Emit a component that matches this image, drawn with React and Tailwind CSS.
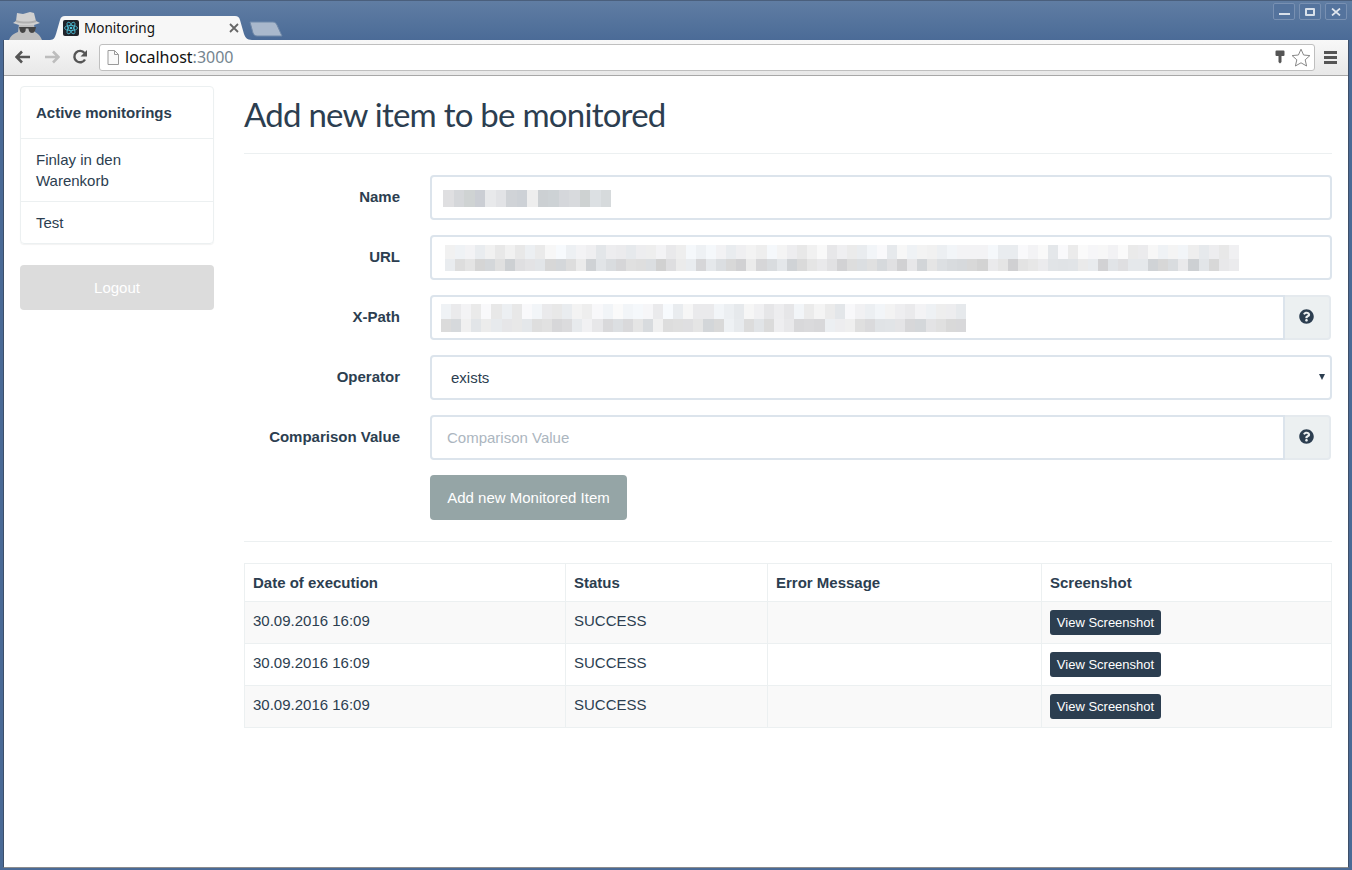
import React from "react";
import { FaQuestionCircle } from "react-icons/fa";

function cells(n, seed, lo, hi) {
  const out = [];
  let s = seed;
  for (let i = 0; i < n; i++) {
    s = (s * 1103515245 + 12345) & 0x7fffffff;
    const v = lo + ((s >> 8) % (hi - lo + 1));
    const tint = (s >> 4) % 3;
    out.push(`rgb(${v - (tint === 0 ? 3 : 0)},${v},${v + (tint === 0 ? 3 : tint === 1 ? 2 : 0)})`);
  }
  return out;
}

const NAME_CELLS = ["#dfdfe1","#d5d7da","#cfd3d3","#cbced4","#e8e9eb","#e2e3e6","#d0d3d7","#cdd1d6","#eeeeee","#ccd0d3","#cdd2d5","#d5d7db","#d8dadd","#ced2d2","#dce0e3","#d6dadc"];

function PixelRow({ colors, cell, height }) {
  return (
    <div className="flex" style={{ height }}>
      {colors.map((c, i) => (
        <div key={i} className="shrink-0" style={{ width: cell, height, background: c }} />
      ))}
    </div>
  );
}

function Pixels({ rows, cell }) {
  return (
    <div className="flex flex-col">
      {rows.map((r, i) => (
        <PixelRow key={i} colors={r.colors} cell={cell} height={r.height} />
      ))}
    </div>
  );
}

function Label({ children }) {
  return (
    <div className="w-[156px] shrink-0 pt-[11px] text-right text-[15px] leading-[21px] font-bold text-[#2c3e50]">
      {children}
    </div>
  );
}

function Help() {
  return (
    <div className="mr-[1px] flex w-[46px] shrink-0 items-center justify-center rounded-r border-2 border-l-0 border-[#e5eaee] bg-[#ecf0f1] pr-[2px]">
      <FaQuestionCircle className="mb-[2px] text-[#2c3e50]" size={15} />
    </div>
  );
}

function Row({ label, children }) {
  return (
    <div className="flex h-[45px] gap-[30px]">
      <Label>{label}</Label>
      <div className="flex min-w-0 flex-1">{children}</div>
    </div>
  );
}

function Incognito() {
  return (
    <svg width="36" height="28" viewBox="0 0 36 28" className="shrink-0">
      <path d="M10 12 L25 12 L26 20 C28 21 31 23 33 28 L0 28 C2 23 6 21 9 20 Z" fill="#bebebe" />
      <path d="M8 1 L14 2 L21 0 L25 1 L27 9 L31 11 L25 13 L10 13 L4 11 L7 9 Z" fill="#d0d0d0" />
      <path d="M7 8 C13 10 21 10 27 8 L27.5 10 C21 12 13 12 6.5 10 Z" fill="#b0b0b0" />
      <path d="M10 15 L17 15 L16.5 19 C15.5 21.5 12 21.5 11 19 Z M19 15 L27 15 L26 19 C25 21.5 21 21.5 20 19 Z M16 15 L20 15 L20 16.5 L16 16.5 Z" fill="#444444" />
    </svg>
  );
}

function ReactFavicon() {
  return (
    <svg width="16" height="16" viewBox="0 0 16 16" className="shrink-0">
      <rect width="16" height="16" rx="2" fill="#20232a" />
      <g fill="none" stroke="#4fc3dc" strokeWidth="0.8">
        <ellipse cx="8" cy="8" rx="6.5" ry="2.6" />
        <ellipse cx="8" cy="8" rx="6.5" ry="2.6" transform="rotate(60 8 8)" />
        <ellipse cx="8" cy="8" rx="6.5" ry="2.6" transform="rotate(120 8 8)" />
      </g>
      <circle cx="8" cy="8" r="1.3" fill="#4fc3dc" />
    </svg>
  );
}

function WinBtn({ children }) {
  return (
    <div className="flex h-[17px] w-[22px] items-center justify-center rounded-[2px] border border-[#7890b2] bg-[#54739d]">
      {children}
    </div>
  );
}

function TitleBar() {
  return (
    <div className="flex h-[40px] shrink-0 border-t border-[#4a5f7c] bg-gradient-to-b from-[#607da3] via-[#55749d] to-[#4b6b97] pl-[9px]">
      <div className="flex items-end">
        <Incognito />
      </div>
      <div className="relative ml-[5px] flex h-[24px] w-[202px] shrink-0 items-center self-end pl-[13px] pr-[13px]">
        <svg width="202" height="24" viewBox="0 0 202 24" className="absolute inset-0">
          <path d="M0 24 C4 24 5 21 6 18 L10 4 C11 1 12 0 15 0 L185 0 C188 0 189 1 190 4 L194 18 C195 21 197 24 202 24 Z" fill="#f7f7f7" />
        </svg>
        <div className="relative flex w-full items-center">
          <ReactFavicon />
          <span className="ml-[5px] flex-1 text-[13.5px] leading-[16px] text-[#111] [font-family:'Noto_Sans',sans-serif]">Monitoring</span>
          <svg width="10" height="10" viewBox="0 0 10 10">
            <path d="M1 1 L9 9 M9 1 L1 9" stroke="#666" strokeWidth="1.8" />
          </svg>
        </div>
      </div>
      <svg width="34" height="16" viewBox="0 0 34 16" className="-ml-[3px] mt-[20px] shrink-0">
        <path d="M1 1 L24 1 C26 1 27 2 28 4 L33 15 L8 15 C6 15 5 14 4 12 Z" fill="#a9b8cc" stroke="#6f88a8" strokeWidth="1" />
      </svg>
      <div className="ml-auto flex gap-[4px] pr-[5px] pt-[2px]">
        <WinBtn><div className="mt-[5px] h-[2px] w-[11px] bg-[#d8e0ea]" /></WinBtn>
        <WinBtn><div className="h-[8px] w-[10px] rounded-[1px] border-2 border-[#d8e0ea]" /></WinBtn>
        <WinBtn>
          <svg width="10" height="8" viewBox="0 0 10 8"><path d="M1 0.5 L9 7.5 M9 0.5 L1 7.5" stroke="#e0e6ee" strokeWidth="1.7" /></svg>
        </WinBtn>
      </div>
    </div>
  );
}

function Toolbar() {
  return (
    <div className="flex h-[36px] shrink-0 items-center rounded-t-[3px] border-b border-[#a8a8a8] bg-gradient-to-b from-[#f8f8f8] to-[#e8e8e8] pb-[1px]">
      <svg width="16" height="14" viewBox="0 0 16 14" className="ml-[11px] shrink-0">
        <path d="M7 1.5 L1.5 7 L7 12.5 M2 7 L15 7" fill="none" stroke="#555" strokeWidth="2.6" />
      </svg>
      <svg width="16" height="14" viewBox="0 0 16 14" className="ml-[13px] shrink-0">
        <path d="M9 1.5 L14.5 7 L9 12.5 M14 7 L1 7" fill="none" stroke="#bdbdbd" strokeWidth="2.6" />
      </svg>
      <svg width="16" height="16" viewBox="0 0 16 16" className="ml-[12px] shrink-0">
        <path d="M13 10.5 A5.7 5.7 0 1 1 12.5 4" fill="none" stroke="#555" strokeWidth="2.4" />
        <path d="M15 1 L15 7.5 L8.5 7.5 Z" fill="#555" />
      </svg>
      <div className="ml-[11px] flex h-[27px] flex-1 items-center rounded-[3px] border border-[#bfbfbf] bg-white">
        <svg width="12" height="15" viewBox="0 0 12 15" className="ml-[7px] shrink-0">
          <path d="M1 0.5 L7.5 0.5 L11.5 4.5 L11.5 14.5 L1 14.5 Z" fill="#fafafa" stroke="#9a9a9a" />
          <path d="M7.5 0.5 L7.5 4.5 L11.5 4.5" fill="none" stroke="#9a9a9a" />
        </svg>
        <span className="ml-[6px] flex-1 text-[16px] leading-[18px] text-[#111] [font-family:'Noto_Sans',sans-serif]">
          localhost<span className="text-[#75858f]">:3000</span>
        </span>
        <svg width="10" height="14" viewBox="0 0 10 14" className="shrink-0">
          <path d="M1.5 0.5 L8.5 0.5 Q9.5 0.5 9.5 1.5 L9.5 5 Q9.5 6 8.5 6 L6.5 6 L6.5 12 L5 13.5 L3.5 12 L3.5 6 L1.5 6 Q0.5 6 0.5 5 L0.5 1.5 Q0.5 0.5 1.5 0.5 Z" fill="#555" />
        </svg>
        <svg width="20" height="19" viewBox="0 0 20 19" className="ml-[6px] mr-[3px] shrink-0">
          <path d="M10 1.2 L12.6 7 L18.9 7.6 L14.2 11.8 L15.6 18 L10 14.8 L4.4 18 L5.8 11.8 L1.1 7.6 L7.4 7 Z" fill="#fff" stroke="#888" strokeWidth="1" />
        </svg>
      </div>
      <div className="ml-[9px] mr-[11px] flex w-[13px] shrink-0 flex-col gap-[2px]">
        <div className="h-[3px] bg-[#555]" />
        <div className="h-[3px] bg-[#555]" />
        <div className="h-[3px] bg-[#555]" />
      </div>
    </div>
  );
}

function Sidebar() {
  return (
    <div className="w-[194px] shrink-0 pt-[10px]">
      <div className="overflow-hidden rounded border border-[#ecf0f1] text-[15px] leading-[21px] text-[#2c3e50] shadow-[0_1px_1px_rgba(0,0,0,0.05)]">
        <div className="h-[52px] border-b border-[#ecf0f1] px-[15px] pt-[15px] font-bold">Active monitorings</div>
        <div className="h-[63px] border-b border-[#ecf0f1] px-[15px] pt-[10px]">Finlay in den<br />Warenkorb</div>
        <div className="h-[41px] px-[15px] pt-[10px]">Test</div>
      </div>
      <div className="mt-[21px] flex h-[45px] items-center justify-center rounded bg-[#dcdcdc] pt-[1px] text-[15px] text-white">Logout</div>
    </div>
  );
}

const inputBox = "flex flex-1 items-center border-2 border-[#dce4ec] bg-white text-[15px] text-[#2c3e50]";

function Form() {
  const urlRows = [
    { colors: cells(79, 7, 230, 250), height: 14 },
    { colors: cells(79, 19, 208, 236), height: 12 },
  ];
  const xRows = [
    { colors: cells(52, 31, 230, 250), height: 15 },
    { colors: cells(52, 53, 214, 242), height: 13 },
  ];
  return (
    <div className="flex flex-col gap-[15px]">
      <Row label="Name">
        <div className={`${inputBox} rounded pl-[11px] pt-[1px]`}>
          <Pixels rows={[{ colors: NAME_CELLS, height: 17 }]} cell={10.5} />
        </div>
      </Row>
      <Row label="URL">
        <div className={`${inputBox} rounded pl-[13px]`}>
          <Pixels rows={urlRows} cell={10.06} />
        </div>
      </Row>
      <Row label="X-Path">
        <div className={`${inputBox} rounded-l pl-[9px]`}>
          <Pixels rows={xRows} cell={10.1} />
        </div>
        <Help />
      </Row>
      <Row label="Operator">
        <div className="relative flex flex-1">
          <select defaultValue="exists" className={`${inputBox} appearance-none rounded pl-[19px] pt-[2px] outline-none`}>
            <option>exists</option>
          </select>
          <span className="absolute right-[7px] top-[19px] h-0 w-0 border-x-[3.5px] border-t-[6px] border-x-transparent border-t-[#2c3e50]" />
        </div>
      </Row>
      <Row label="Comparison Value">
        <input
          placeholder="Comparison Value"
          className={`${inputBox} min-w-0 rounded-l px-[15px] pt-[2px] outline-none placeholder:text-[#acb6c0]`}
        />
        <Help />
      </Row>
      <div className="pl-[186px]">
        <div className="flex h-[45px] w-[197px] items-center justify-center rounded bg-[#95a5a6] pt-[1px] text-[15px] text-white">
          Add new Monitored Item
        </div>
      </div>
    </div>
  );
}

function ExecTable() {
  const rows = [0, 1, 2];
  return (
    <table className="w-full table-fixed border-collapse border border-[#ecf0f1] text-[15px] leading-[21px] text-[#2c3e50]">
      <colgroup>
        <col className="w-[321px]" />
        <col className="w-[202px]" />
        <col className="w-[274px]" />
        <col />
      </colgroup>
      <thead>
        <tr className="h-[38px]">
          {["Date of execution", "Status", "Error Message", "Screenshot"].map((h) => (
            <th key={h} className="border border-[#ecf0f1] px-[8px] text-left font-bold">{h}</th>
          ))}
        </tr>
      </thead>
      <tbody>
        {rows.map((r) => (
          <tr key={r} className={`h-[42px] ${r % 2 === 0 ? "bg-[#f9f9f9]" : "bg-white"}`}>
            <td className="border border-[#ecf0f1] px-[8px] pb-[5px]">30.09.2016 16:09</td>
            <td className="border border-[#ecf0f1] px-[8px] pb-[5px]">SUCCESS</td>
            <td className="border border-[#ecf0f1] px-[8px]"></td>
            <td className="border border-[#ecf0f1] px-[8px]">
              <div className="flex h-[25px] w-[111px] items-center justify-center rounded-[3px] bg-[#2c3e50] text-[13px] text-white">View Screenshot</div>
            </td>
          </tr>
        ))}
      </tbody>
    </table>
  );
}

export default function App() {
  return (
    <div className="flex h-[870px] w-[1352px] flex-col overflow-hidden bg-[#4a6a96] [font-family:'Liberation_Sans',Arial,sans-serif]">
      <TitleBar />
      <div className="mx-[3px] mb-[2px] flex min-h-0 flex-1 flex-col border-x border-b border-x-[#3d4f69] border-b-[#8d8d8d] bg-white">
        <Toolbar />
        <div className="flex flex-1 gap-[30px] px-[16px]">
          <Sidebar />
          <div className="min-w-0 flex-1">
            <h1 className="mt-[19px] text-[33px] leading-[38px] font-normal tracking-[-0.75px] text-[#2c3e50] [font-family:Lato,sans-serif]">
              Add new item to be monitored
            </h1>
            <div className="mb-[21px] mt-[20px] h-px bg-[#ecf0f1]" />
            <Form />
            <div className="my-[21px] h-px bg-[#ecf0f1]" />
            <ExecTable />
          </div>
        </div>
      </div>
    </div>
  );
}
